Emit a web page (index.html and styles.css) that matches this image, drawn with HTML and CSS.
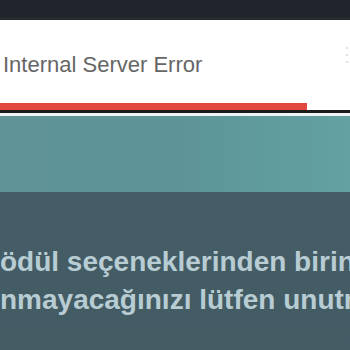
FILE: index.html
```html
<!DOCTYPE html>
<html>
<head>
<meta charset="utf-8">
<link rel="stylesheet" href="styles.css">
</head>
<body>
<div class="topbar"></div>
<div class="panel">
  <div class="panel-body">
    <span class="error-text">Internal Server Error</span>
    <span class="edge-glyph">&#8942;</span>
  </div>
  <div class="progress"><div class="progress-fill" style="width:307px"></div></div>
</div>
<div class="sep-dark"></div>
<div class="sep-light"></div>
<div class="hero"></div>
<div class="content">
  <p class="line">ödül seçeneklerinden birini</p>
  <p class="line">nmayacağınızı lütfen unutmayın</p>
</div>
</body>
</html>
```
FILE: styles.css
```css
html, body {
  margin: 0;
  padding: 0;
  width: 350px;
  height: 350px;
  overflow: hidden;
  background: #445c65;
  font-family: "Liberation Sans", Arial, sans-serif;
}
.topbar {
  height: 17px;
  background: #1f232b;
  border-bottom: 3px solid #262b2b;
}
.panel {
  background: #ffffff;
  display: flex;
  flex-direction: column;
}
.panel-body {
  height: 83px;
  display: flex;
  align-items: center;
  justify-content: space-between;
  padding: 6px 0 0 3px;
  box-sizing: border-box;
}
.error-text {
  font-size: 22px;
  color: #666666;
  line-height: 25px;
}
.edge-glyph {
  font-size: 20px;
  color: #e2e2e2;
  margin-right: -7px;
  margin-top: -22px;
}
.progress {
  height: 7px;
  background: #ffffff;
}
.progress-fill {
  height: 100%;
  background: #e2473f;
}
.sep-dark {
  height: 3px;
  background: #1b1b1b;
}
.sep-light {
  height: 3px;
  background: #eef3f3;
}
.hero {
  height: 76px;
  background: linear-gradient(90deg, #5f9397 0%, #5d9497 50%, #63a1a3 100%);
}
.content {
  box-sizing: border-box;
  height: 158px;
  padding-top: 51px;
  background: linear-gradient(180deg, #455d66 0%, #435b63 100%);
}
.line {
  margin: 0;
  font-size: 28px;
  line-height: 38px;
  font-weight: bold;
  color: #b8ccd3;
  white-space: nowrap;
  overflow: hidden;
}
```
